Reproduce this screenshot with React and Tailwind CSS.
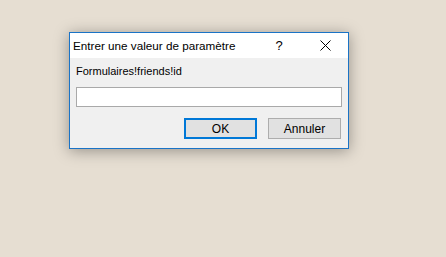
import React from 'react';

export default function App() {
  return (
    <div className="w-[446px] h-[257px] bg-[#e6ded2] overflow-hidden pt-[32px] pl-[69px]">
      <div className="w-[280px] h-[117px] border border-[#1a73c6] bg-[#f0f0f0] shadow-[0_2px_14px_rgba(0,0,0,0.35)] flex flex-col">
        <div className="h-[25px] bg-white flex items-center text-black" style={{ fontFamily: '"Segoe UI", "Liberation Sans", Arial, sans-serif' }}>
          <span className="pl-[3px] text-[11.7px] leading-none flex-1">Entrer une valeur de paramètre</span>
          <span className="w-[46px] text-center text-[13px] leading-none">?</span>
          <span className="w-[46px] flex justify-center">
            <svg width="11" height="11" viewBox="0 0 11 11" className="block">
              <path d="M0.5 0.5 L10.5 10.5 M10.5 0.5 L0.5 10.5" stroke="#000" strokeWidth="1" fill="none" />
            </svg>
          </span>
        </div>
        <div className="flex-1 flex flex-col px-[6px] text-[11px] text-black" style={{ fontFamily: '"Liberation Sans", Arial, sans-serif' }}>
          <div className="mt-[6px] h-[14px] leading-[14px] text-[11px]">Formulaires!friends!id</div>
          <input className="mt-[9px] h-[20px] w-[266px] bg-white border border-[#a9a9a9] outline-none" />
          <div className="mt-[11px] flex justify-end gap-[11px] pr-[1px]">
            <button className="w-[73px] h-[21px] bg-[#e1e1e1] border-2 border-[#0078d7] text-[12px] leading-none text-black">OK</button>
            <button className="w-[73px] h-[21px] bg-[#e1e1e1] border border-[#adadad] text-[12px] leading-none text-black">Annuler</button>
          </div>
        </div>
      </div>
    </div>
  );
}
